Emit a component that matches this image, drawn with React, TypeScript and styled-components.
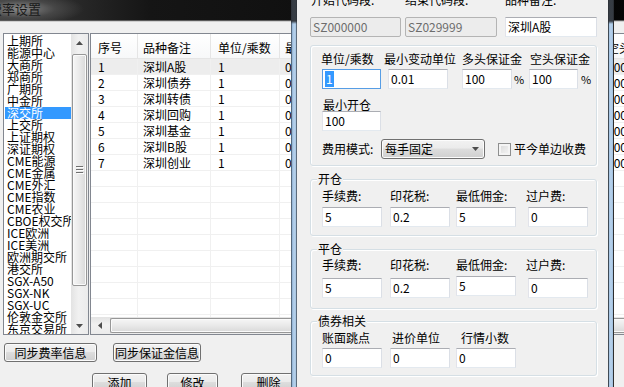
import styled, { createGlobalStyle } from "styled-components";

const GlobalStyle = createGlobalStyle`
  * { box-sizing: border-box; }
  html, body { margin: 0; padding: 0; }
  body {
    width: 624px;
    height: 387px;
    overflow: hidden;
    background: #f0f0f0;
    font-family: "Noto Sans CJK SC", "Noto Sans", sans-serif;
    font-size: 12px;
    color: #000;
  }
`;

const Desktop = styled.div`
  position: relative;
  width: 624px;
  height: 387px;
  overflow: hidden;
`;

/* ---------- back window ---------- */
const MainWindow = styled.div`
  width: 780px;
  height: 387px;
  display: flex;
  flex-direction: column;
  background: #f0f0f0;
`;

const TitleBar = styled.div`
  flex: none;
  height: 21px;
  display: flex;
  align-items: center;
  overflow: hidden;
  background: radial-gradient(ellipse 64px 16px at 20px 9px, #8a8a8a 0%, rgba(80, 80, 80, 0.7) 55%, rgba(0, 0, 0, 0) 100%),
    linear-gradient(90deg, #3c3c3c 0, #151515 150px, #000 100%);
  border-bottom: 1px solid #5a5a5a;
`;

const Title = styled.span`
  margin-left: -11px;
  margin-top: -3px;
  font-size: 13px;
  line-height: 14px;
  color: #1a1a1a;
  white-space: nowrap;
`;

const WinBody = styled.div`
  flex: 1;
  border-top: 1px solid #cfcfcf;
  padding: 11px 0 0 3px;
  display: flex;
  flex-direction: column;
`;

const TopArea = styled.div`
  display: flex;
  gap: 1px;
  height: 302px;
`;

const ListBox = styled.div`
  flex: none;
  width: 86px;
  height: 100%;
  border: 1px solid #828790;
  background: #fff;
  display: flex;
`;

const ListItems = styled.ul`
  flex: 1;
  margin: 0;
  padding: 1px 0 0 1px;
  list-style: none;
  overflow: hidden;
`;

const ListItem = styled.li<{ $selected?: boolean }>`
  height: 12px;
  line-height: 12px;
  padding-left: 2px;
  white-space: nowrap;
  background: ${(p) => (p.$selected ? "#3399ff" : "transparent")};
  color: ${(p) => (p.$selected ? "#fff" : "#000")};
`;

const VScroll = styled.div`
  flex: none;
  width: 17px;
  display: flex;
  flex-direction: column;
  background: linear-gradient(90deg, #e3e3e3, #f1f1f1 45%, #ebebeb);
`;

const ArrowCell = styled.div`
  flex: none;
  width: 17px;
  height: 17px;
  display: flex;
  align-items: center;
  justify-content: center;
`;

const VThumb = styled.div`
  flex: none;
  margin: 3px 1px 0;
  height: 232px;
  border: 1px solid #979797;
  border-radius: 2px;
  background: linear-gradient(90deg, #f6f6f6, #e9e9e9 50%, #d9d9d9);
  box-shadow: inset 0 0 0 1px #fafafa;
  display: flex;
  align-items: center;
  justify-content: center;
`;

const Spacer = styled.div`
  flex: 1;
`;

const Table = styled.div`
  flex: 1;
  height: 100%;
  border: 1px solid #828790;
  background: #fff;
  display: flex;
  flex-direction: column;
  overflow: hidden;
`;

const HeaderRow = styled.div`
  flex: none;
  display: flex;
  height: 25px;
  background: linear-gradient(#ffffff, #f7f8f9);
  border-bottom: 1px solid #e5e5e5;
`;

const HeaderCell = styled.div<{ $w: number; $pad: number }>`
  flex: none;
  width: ${(p) => p.$w}px;
  padding: 8px 0 0 ${(p) => p.$pad}px;
  line-height: 12px;
  white-space: nowrap;
  border-right: 1px solid #e5e5e5;
`;

const Rows = styled.div`
  flex: 1;
  overflow: hidden;
`;

const Row = styled.div<{ $active?: boolean }>`
  display: flex;
  height: 16px;
  border-bottom: 1px solid #f0f0f0;
  background: ${(p) => (p.$active ? "#ededed" : "#fff")};
`;

const Cell = styled.div<{ $w: number; $pad: number }>`
  flex: none;
  width: ${(p) => p.$w}px;
  padding-left: ${(p) => p.$pad}px;
  line-height: 15px;
  white-space: nowrap;
  border-right: 1px solid #f0f0f0;
`;

const HScroll = styled.div`
  flex: none;
  height: 17px;
  display: flex;
  align-items: stretch;
  background: linear-gradient(#e3e3e3, #f1f1f1 45%, #ebebeb);
`;

const HThumb = styled.div`
  flex: 1;
  margin: 1px 0 1px 2px;
  border: 1px solid #979797;
  border-right: none;
  border-radius: 2px 0 0 2px;
  background: linear-gradient(#f6f6f6, #e9e9e9 50%, #d9d9d9);
  box-shadow: inset 0 0 0 1px #fafafa;
`;

const ButtonRow = styled.div<{ $top: number }>`
  display: flex;
  margin-top: ${(p) => p.$top}px;
`;

const Button = styled.button<{ $w: number; $ml: number }>`
  flex: none;
  width: ${(p) => p.$w}px;
  height: 19px;
  margin-left: ${(p) => p.$ml}px;
  padding: 0;
  border: 1px solid #707070;
  border-radius: 3px;
  background: linear-gradient(#f2f2f2, #ebebeb 45%, #dddddd 50%, #cfcfcf);
  box-shadow: inset 0 0 0 1px #fbfbfb;
  font-family: inherit;
  font-size: 12px;
  line-height: 16px;
  color: #000;
  white-space: nowrap;
`;

/* ---------- front dialog ---------- */
const Dialog = styled.div`
  position: absolute;
  left: 291px;
  top: -12px;
  width: 323px;
  height: 420px;
  display: flex;
`;

const Frame = styled.div<{ $side: "left" | "right" }>`
  flex: none;
  width: 6px;
  background: linear-gradient(rgba(44, 48, 54, 0.92) 0, rgba(44, 48, 54, 0.92) 33px, rgba(44, 48, 54, 0) 36px),
    ${(p) =>
      p.$side === "left"
        ? "linear-gradient(90deg, #56697c 0 1px, #8eb0d3 1px, #b8d3ed 3px, #a6c3e0 5px, #5c6c7c 5px 6px)"
        : "linear-gradient(90deg, #3f4a55 0 1px, #a3c2e2 1px, #b9d3ec 3px, #9fbedd 5px, #2e2e2e 5px 6px)"};
`;

const DialogBody = styled.div`
  flex: 1;
  background: #f0f0f0;
  padding: 6px 0 0 13px;
  display: flex;
  flex-direction: column;
`;

const TopGrid = styled.div`
  display: grid;
  grid-template-columns: 95px 100px 92px;
  row-gap: 11px;
`;

const FieldGrid = styled.div<{ $cols: string; $gap: number }>`
  display: grid;
  grid-template-columns: ${(p) => p.$cols};
  row-gap: ${(p) => p.$gap}px;
  align-items: start;
`;

const Label = styled.div<{ $shift?: number; $mt?: number }>`
  line-height: 12px;
  white-space: nowrap;
  margin-left: ${(p) => p.$shift ?? 0}px;
  margin-top: ${(p) => p.$mt ?? 0}px;
`;

const TextBox = styled.div<{ $w: number; $dy?: number; $focus?: boolean; $disabled?: boolean }>`
  width: ${(p) => p.$w}px;
  height: 20px;
  margin-top: ${(p) => p.$dy ?? 0}px;
  padding-left: 2px;
  line-height: 18px;
  white-space: nowrap;
  overflow: hidden;
  background: ${(p) => (p.$disabled ? "#ececec" : "#fff")};
  color: ${(p) => (p.$disabled ? "#6d6d6d" : "#000")};
  border: 1px solid;
  border-color: ${(p) =>
    p.$focus ? "#569de5" : p.$disabled ? "#b4b4b4" : "#abadb3 #dbdfe6 #e3e9ef #e2e3ea"};
  border-radius: ${(p) => (p.$disabled ? 2 : 0)}px;
`;

const Selected = styled.span`
  display: inline-block;
  margin-top: 1px;
  padding: 0 1px;
  line-height: 16px;
  vertical-align: top;
  background: #3399ff;
  color: #fff;
`;

const Inline = styled.div`
  display: flex;
  align-items: center;
`;

const Unit = styled.span<{ $ml: number }>`
  margin-left: ${(p) => p.$ml}px;
  font-size: 11px;
`;

const Group = styled.div<{ $mt: number; $pt: number; $pb: number }>`
  position: relative;
  width: 287px;
  margin-top: ${(p) => p.$mt}px;
  padding: ${(p) => p.$pt}px 0 ${(p) => p.$pb}px 11px;
  border: 1px solid #d5dfe5;
  border-radius: 3px;
  box-shadow: inset 1px 1px 0 #fff, 1px 1px 0 #fff;
`;

const GroupTitle = styled.span`
  position: absolute;
  left: 6px;
  top: -7px;
  padding: 0 1px;
  line-height: 12px;
  background: #f0f0f0;
`;

const FeeRow = styled.div`
  display: flex;
  align-items: center;
  height: 20px;
  margin-top: 8px;
`;

const FeeLabel = styled.div`
  width: 59px;
  line-height: 12px;
`;

const Select = styled.div`
  width: 104px;
  height: 20px;
  padding: 0 5px 0 3px;
  display: flex;
  align-items: center;
  justify-content: space-between;
  border: 1px solid #707070;
  border-radius: 3px;
  background: linear-gradient(#f2f2f2, #ebebeb 45%, #dddddd 50%, #cfcfcf);
  box-shadow: inset 0 0 0 1px #fcfcfc;
  line-height: 12px;
`;

const CheckBox = styled.div`
  width: 13px;
  height: 13px;
  margin-left: 13px;
  border: 1px solid #8e8f8f;
  background: linear-gradient(135deg, #d8d8d8, #f7f7f7);
  box-shadow: inset 0 0 0 2px #f4f4f4;
`;

const CheckLabel = styled.span`
  margin-left: 3px;
  line-height: 12px;
  white-space: nowrap;
`;

/* ---------- data ---------- */
const exchanges = [
  "上期所", "能源中心", "大商所", "郑商所", "广期所", "中金所", "深交所", "上交所",
  "上证期权", "深证期权", "CME能源", "CME金属", "CME外汇", "CME指数", "CME农业",
  "CBOE权交所", "ICE欧洲", "ICE美洲", "欧洲期交所", "港交所", "SGX-A50", "SGX-NK",
  "SGX-UC", "伦敦金交所", "东京交易所",
];

const columns = [
  { title: "序号", width: 47, pad: 7 },
  { title: "品种备注", width: 73, pad: 5 },
  { title: "单位/乘数", width: 69, pad: 7 },
  { title: "最小变动单位", width: 122, pad: 5 },
  { title: "多头保证金", width: 200, pad: 6 },
  { title: "空头保证金", width: 120, pad: 5 },
  { title: "最小开仓", width: 120, pad: 6 },
];

const products = ["深圳A股", "深圳债券", "深圳转债", "深圳回购", "深圳基金", "深圳B股", "深圳创业"];
const rows: string[][] = Array.from({ length: 17 }, (_, i) =>
  i < products.length ? [String(i + 1), products[i], "1", "0.01", "100", "100", "100"] : ["", "", "", "", "", "", ""]
);

const ArrowUp = () => (
  <svg width="7" height="4" viewBox="0 0 7 4">
    <path d="M0 4L3.5 0L7 4Z" fill="#4d4d4d" />
  </svg>
);
const ArrowDown = () => (
  <svg width="7" height="4" viewBox="0 0 7 4">
    <path d="M0 0H7L3.5 4Z" fill="#4d4d4d" />
  </svg>
);
const ArrowLeft = () => (
  <svg width="4" height="7" viewBox="0 0 4 7">
    <path d="M4 0V7L0 3.5Z" fill="#4d4d4d" />
  </svg>
);
const Grip = () => (
  <svg width="8" height="8" viewBox="0 0 8 8">
    <path d="M0 0.5H7M0 3.5H7M0 6.5H7" stroke="#6f6f6f" />
    <path d="M1 1.5H8M1 4.5H8M1 7.5H8" stroke="#fdfdfd" />
  </svg>
);

function App() {
  return (
    <Desktop>
      <GlobalStyle />
      <MainWindow>
        <TitleBar>
          <Title>费率设置</Title>
        </TitleBar>
        <WinBody>
          <TopArea>
            <ListBox>
              <ListItems>
                {exchanges.map((name) => (
                  <ListItem key={name} $selected={name === "深交所"}>
                    {name}
                  </ListItem>
                ))}
              </ListItems>
              <VScroll>
                <ArrowCell>
                  <ArrowUp />
                </ArrowCell>
                <VThumb>
                  <Grip />
                </VThumb>
                <Spacer />
                <ArrowCell>
                  <ArrowDown />
                </ArrowCell>
              </VScroll>
            </ListBox>
            <Table>
              <HeaderRow>
                {columns.map((c) => (
                  <HeaderCell key={c.title} $w={c.width} $pad={c.pad}>
                    {c.title}
                  </HeaderCell>
                ))}
              </HeaderRow>
              <Rows>
                {rows.map((r, i) => (
                  <Row key={i} $active={i === 0}>
                    {r.map((v, j) => (
                      <Cell key={j} $w={columns[j].width} $pad={columns[j].pad}>
                        {v}
                      </Cell>
                    ))}
                  </Row>
                ))}
              </Rows>
              <HScroll>
                <ArrowCell>
                  <ArrowLeft />
                </ArrowCell>
                <HThumb />
              </HScroll>
            </Table>
          </TopArea>
          <ButtonRow $top={8}>
            <Button $w={93} $ml={1}>同步费率信息</Button>
            <Button $w={88} $ml={16}>同步保证金信息</Button>
          </ButtonRow>
          <ButtonRow $top={11}>
            <Button $w={55} $ml={89}>添加</Button>
            <Button $w={51} $ml={20}>修改</Button>
            <Button $w={55} $ml={23}>删除</Button>
          </ButtonRow>
        </WinBody>
      </MainWindow>

      <Dialog>
        <Frame $side="left" />
        <DialogBody>
          <TopGrid>
            <Label $shift={1}>开始代码段:</Label>
            <Label>结束代码段:</Label>
            <Label>品种备注:</Label>
            <TextBox $w={91} $disabled>SZ000000</TextBox>
            <TextBox $w={92} $disabled>SZ029999</TextBox>
            <TextBox $w={92}>深圳A股</TextBox>
          </TopGrid>

          <Group $mt={8} $pt={7} $pb={6}>
            <FieldGrid $cols="66px 74px 67px 1fr" $gap={4}>
              <Label $shift={-1}>单位/乘数</Label>
              <Label $shift={-4}>最小变动单位</Label>
              <Label>多头保证金</Label>
              <Label $shift={1}>空头保证金</Label>
              <TextBox $w={59} $focus>
                <Selected>1</Selected>
              </TextBox>
              <TextBox $w={60}>0.01</TextBox>
              <Inline>
                <TextBox $w={50}>100</TextBox>
                <Unit $ml={2}>%</Unit>
              </Inline>
              <Inline>
                <TextBox $w={49}>100</TextBox>
                <Unit $ml={3}>%</Unit>
              </Inline>
            </FieldGrid>
            <Label $shift={1} $mt={10}>最小开仓</Label>
            <TextBox $w={59}>100</TextBox>
            <FeeRow>
              <FeeLabel>费用模式:</FeeLabel>
              <Select>
                <span>每手固定</span>
                <ArrowDown />
              </Select>
              <CheckBox />
              <CheckLabel>平今单边收费</CheckLabel>
            </FeeRow>
          </Group>

          <Group $mt={13} $pt={10} $pb={8}>
            <GroupTitle>开仓</GroupTitle>
            <FieldGrid $cols="68px 66px 72px 60px" $gap={5}>
              <Label>手续费:</Label>
              <Label>印花税:</Label>
              <Label>最低佣金:</Label>
              <Label $shift={-2}>过户费:</Label>
              <TextBox $w={60}>5</TextBox>
              <TextBox $w={60}>0.2</TextBox>
              <TextBox $w={60}>5</TextBox>
              <TextBox $w={60}>0</TextBox>
            </FieldGrid>
          </Group>

          <Group $mt={13} $pt={9} $pb={10}>
            <GroupTitle>平仓</GroupTitle>
            <FieldGrid $cols="68px 66px 72px 60px" $gap={7}>
              <Label>手续费:</Label>
              <Label>印花税:</Label>
              <Label>最低佣金:</Label>
              <Label $shift={-2}>过户费:</Label>
              <TextBox $w={60}>5</TextBox>
              <TextBox $w={60}>0.2</TextBox>
              <TextBox $w={60} $dy={-2}>5</TextBox>
              <TextBox $w={60}>0</TextBox>
            </FieldGrid>
          </Group>

          <Group $mt={12} $pt={10} $pb={7}>
            <GroupTitle>债券相关</GroupTitle>
            <FieldGrid $cols="68px 66px 72px 60px" $gap={4}>
              <Label>账面跳点</Label>
              <Label $shift={2}>进价单位</Label>
              <Label $shift={5}>行情小数</Label>
              <span />
              <TextBox $w={60}>0</TextBox>
              <TextBox $w={60}>0</TextBox>
              <TextBox $w={60}>0</TextBox>
            </FieldGrid>
          </Group>
        </DialogBody>
        <Frame $side="right" />
      </Dialog>
    </Desktop>
  );
}

export default App;
